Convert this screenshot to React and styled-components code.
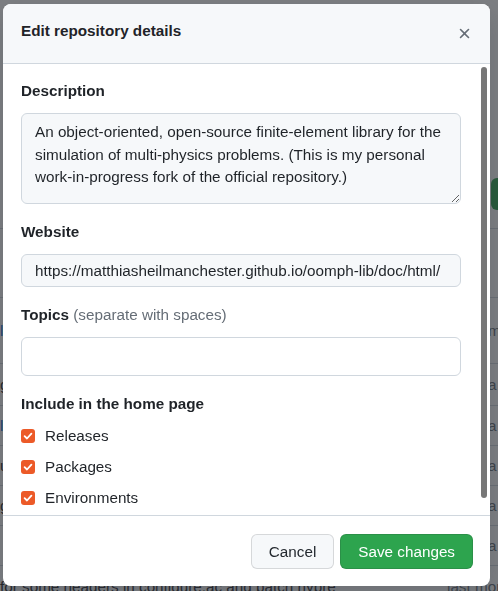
import React from 'react';
import styled, { createGlobalStyle } from 'styled-components';

const GlobalStyle = createGlobalStyle`
  html, body {
    margin: 0;
    padding: 0;
    height: 100%;
    overflow: hidden;
  }
  body {
    font-family: "Liberation Sans", Arial, sans-serif;
    color: #1f2328;
    background: #ffffff;
  }
  * {
    box-sizing: border-box;
  }
`;

// ---- page behind the dialog ----

const Page = styled.div`
  width: 498px;
  height: 591px;
  overflow: hidden;
  background: #ffffff;
  padding-top: 178px;
  font-size: 15.25px;
`;

const Toolbar = styled.div`
  display: flex;
  height: 32px;
  padding-left: 491px;
  margin-bottom: 18px;
`;

const CodeButton = styled.div`
  flex: none;
  width: 90px;
  height: 32px;
  background: #2da44e;
  color: #fff;
  border-radius: 6px;
  padding: 6px 12px;
  font-weight: bold;
`;

const FileRow = styled.div`
  display: flex;
  align-items: center;
  justify-content: space-between;
  height: ${(p) => p.$h}px;
  border-top: 1px solid #d0d7de;
  white-space: nowrap;
  overflow: hidden;
`;

const FileName = styled.span`
  color: ${(p) => (p.$link ? '#0969da' : '#1f2328')};
`;

const FileDate = styled.span`
  flex: none;
  color: #656d76;
  width: ${(p) => p.$w}px;
  overflow: hidden;
`;

const Backdrop = styled.div`
  position: fixed;
  inset: 0;
  background: rgba(31, 35, 40, 0.58);
`;

// ---- dialog ----

const Dialog = styled.div`
  position: fixed;
  top: 4px;
  left: 3px;
  width: 487px;
  height: 582px;
  display: flex;
  flex-direction: column;
  background: #ffffff;
  border-radius: 8px;
  overflow: hidden;
  box-shadow: 0 8px 24px rgba(66, 74, 83, 0.3);
`;

const Header = styled.div`
  flex: none;
  display: flex;
  align-items: flex-start;
  justify-content: space-between;
  height: 60px;
  padding: 17px 17px 0 18px;
  background: #f6f8fa;
  border-bottom: 1px solid #d0d7de;
`;

const Title = styled.h1`
  margin: 0;
  font-size: 15.25px;
  line-height: 20px;
  font-weight: bold;
  color: #1f2328;
`;

const CloseButton = styled.button`
  display: flex;
  width: 17px;
  height: 17px;
  margin-top: 4px;
  padding: 0;
  border: 0;
  background: none;
  color: #656d76;
`;

const Main = styled.div`
  flex: 1;
  min-height: 0;
  display: flex;
`;

const Body = styled.div`
  flex: 1;
  min-width: 0;
  overflow: hidden;
  padding: 17px 19px 16px 18px;
`;

const ScrollRail = styled.div`
  flex: none;
  width: 10px;
  padding: 3px 3px 17px 1px;
`;

const ScrollThumb = styled.div`
  height: 100%;
  background: #777777;
  border-radius: 3px;
`;

const FormGroup = styled.div`
  margin-bottom: 18px;
`;

const Label = styled.label`
  display: block;
  margin-bottom: 12px;
  font-size: 15.25px;
  line-height: 20px;
  font-weight: bold;
`;

const Note = styled.span`
  font-weight: normal;
  color: #656d76;
`;

const TextArea = styled.textarea`
  display: block;
  width: 100%;
  height: 91px;
  padding: 7px 13px;
  font-family: "Liberation Sans", Arial, sans-serif;
  font-size: 15.25px;
  line-height: 22.5px;
  color: #1f2328;
  background: #f6f8fa;
  border: 1px solid #d0d7de;
  border-radius: 6px;
  resize: vertical;
  outline: none;
  overflow: hidden;
`;

const TextInput = styled.input`
  display: block;
  width: 100%;
  height: ${(p) => p.$h}px;
  padding: 0 13px;
  font-family: "Liberation Sans", Arial, sans-serif;
  font-size: 15.25px;
  color: #1f2328;
  background: ${(p) => (p.$filled ? '#f6f8fa' : '#ffffff')};
  border: 1px solid #d0d7de;
  border-radius: 6px;
  outline: none;
`;

const Heading = styled.div`
  margin-bottom: 6px;
  font-size: 15.25px;
  line-height: 20px;
  font-weight: bold;
`;

const CheckRow = styled.label`
  display: flex;
  align-items: center;
  gap: 10px;
  height: 31px;
  font-size: 15.25px;
  line-height: 20px;
  color: #1f2328;
`;

const CheckBox = styled.span`
  flex: none;
  display: flex;
  align-items: center;
  justify-content: center;
  width: 14px;
  height: 14px;
  border-radius: 3px;
  background: #ec5a28;
`;

const Footer = styled.div`
  flex: none;
  display: flex;
  justify-content: flex-end;
  gap: 6px;
  padding: 18px 17px 17px;
  border-top: 1px solid #d0d7de;
`;

const Button = styled.button`
  height: 35px;
  padding: 0 17px;
  font-family: "Liberation Sans", Arial, sans-serif;
  font-size: 15.25px;
  border-radius: 6px;
  border: 1px solid rgba(31, 35, 40, 0.15);
  background: ${(p) => (p.$primary ? '#2da44e' : '#f6f8fa')};
  color: ${(p) => (p.$primary ? '#ffffff' : '#24292f')};
`;

const CloseIcon = () => (
  <svg width="17" height="17" viewBox="0 0 16 16" fill="currentColor">
    <path d="M3.72 3.72a.75.75 0 0 1 1.06 0L8 6.94l3.22-3.22a.749.749 0 0 1 1.275.326.749.749 0 0 1-.215.734L9.06 8l3.22 3.22a.749.749 0 0 1-.326 1.275.749.749 0 0 1-.734-.215L8 9.06l-3.22 3.22a.751.751 0 0 1-1.042-.018.751.751 0 0 1-.018-1.042L6.94 8 3.72 4.78a.75.75 0 0 1 0-1.06Z" />
  </svg>
);

const Check = () => (
  <svg width="10" height="10" viewBox="0 0 10 10" fill="none">
    <path d="M1.6 5.2 L4 7.5 L8.4 2.6" stroke="#fff" strokeWidth="1.8" strokeLinecap="round" strokeLinejoin="round" />
  </svg>
);

const rows = [
  { h: 69, name: '', link: false, date: '', w: 10 },
  { h: 66, name: 'l', link: true, date: 'm', w: 10 },
  { h: 42, name: 'g', link: false, date: 'a', w: 10 },
  { h: 40, name: 'l', link: true, date: 'a', w: 10 },
  { h: 40, name: 'u', link: false, date: 'a', w: 10 },
  { h: 40, name: 'g', link: false, date: 'a', w: 10 },
  { h: 40, name: '', link: false, date: 'a', w: 10 },
  { h: 41, name: 'for some headers in configure.ac and patch hypre', link: false, date: 'last month', w: 51 },
];

const includes = ['Releases', 'Packages', 'Environments'];

export default function App() {
  return (
    <>
      <GlobalStyle />
      <Page>
        <Toolbar>
          <CodeButton>Code</CodeButton>
        </Toolbar>
        {rows.map((r, i) => (
          <FileRow key={i} $h={r.h}>
            <FileName $link={r.link}>{r.name}</FileName>
            <FileDate $w={r.w}>{r.date}</FileDate>
          </FileRow>
        ))}
      </Page>
      <Backdrop />
      <Dialog role="dialog">
        <Header>
          <Title>Edit repository details</Title>
          <CloseButton aria-label="Close">
            <CloseIcon />
          </CloseButton>
        </Header>
        <Main>
          <Body>
            <FormGroup>
              <Label>Description</Label>
              <TextArea
                readOnly
                defaultValue="An object-oriented, open-source finite-element library for the simulation of multi-physics problems. (This is my personal work-in-progress fork of the official repository.)"
              />
            </FormGroup>
            <FormGroup>
              <Label>Website</Label>
              <TextInput
                $h={33}
                $filled
                readOnly
                defaultValue="https://matthiasheilmanchester.github.io/oomph-lib/doc/html/"
              />
            </FormGroup>
            <FormGroup>
              <Label>
                Topics <Note>(separate with spaces)</Note>
              </Label>
              <TextInput $h={39} />
            </FormGroup>
            <Heading>Include in the home page</Heading>
            {includes.map((name) => (
              <CheckRow key={name}>
                <CheckBox>
                  <Check />
                </CheckBox>
                {name}
              </CheckRow>
            ))}
          </Body>
          <ScrollRail>
            <ScrollThumb />
          </ScrollRail>
        </Main>
        <Footer>
          <Button>Cancel</Button>
          <Button $primary>Save changes</Button>
        </Footer>
      </Dialog>
    </>
  );
}
